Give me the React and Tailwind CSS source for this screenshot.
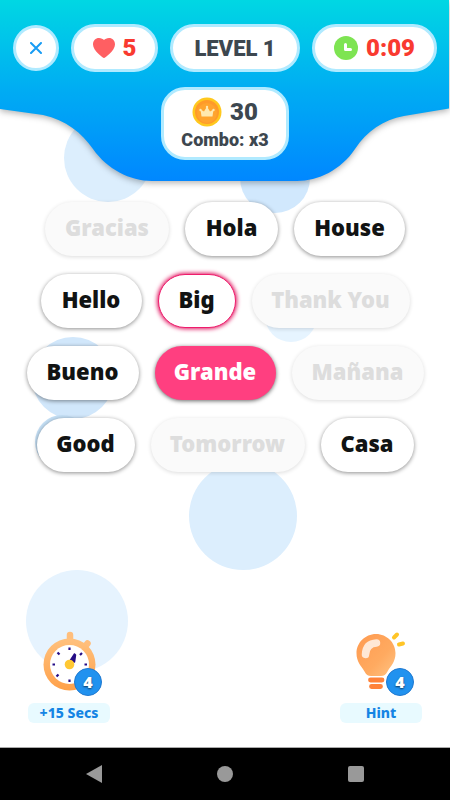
import React, { useState } from 'react';
import clsx from 'clsx';

const ROWS = [
  [
    { text: 'Gracias', done: true, size: 'w-31' },
    { text: 'Hola', size: 'w-[93px]' },
    { text: 'House', size: 'w-[111px]' },
  ],
  [
    { text: 'Hello', size: 'w-[101px]' },
    { text: 'Big', hinted: true, size: 'w-[78px]' },
    { text: 'Thank You', done: true, size: 'w-[158px]' },
  ],
  [
    { text: 'Bueno', size: 'w-[112px]' },
    { text: 'Grande', size: 'w-[121px]' },
    { text: 'Mañana', done: true, size: 'w-[132px]' },
  ],
  [
    { text: 'Good', size: 'w-[98px]' },
    { text: 'Tomorrow', done: true, size: 'w-[154px]' },
    { text: 'Casa', size: 'w-[93px]' },
  ],
];

const pill = 'flex items-center justify-center bg-white border-3 border-[#b0eaff]';

function Backdrop() {
  return (
    <svg
      className="absolute inset-0 h-full w-full"
      viewBox="0 0 450 748"
      preserveAspectRatio="xMidYMin slice"
      aria-hidden="true"
    >
      <circle cx="108" cy="158" r="44" fill="#dceefd" />
      <circle cx="275" cy="178" r="35" fill="#d1e8fd" />
      <circle cx="291" cy="316" r="26" fill="#e6f4ff" />
      <circle cx="73" cy="378" r="41" fill="#d1e7fb" />
      <circle cx="62" cy="442" r="27" fill="#c5e0f6" />
      <circle cx="243" cy="516" r="54" fill="#dceefd" />
      <circle cx="77" cy="621" r="51" fill="#e6f3fe" />
    </svg>
  );
}

function HeaderShape() {
  return (
    <svg
      className="absolute inset-0 h-full w-full overflow-visible drop-shadow-[0_2px_3px_rgba(0,0,0,0.3)]"
      viewBox="0 0 450 181"
      preserveAspectRatio="none"
      aria-hidden="true"
    >
      <defs>
        <linearGradient id="sky" x1="0" y1="0" x2="0" y2="1">
          <stop offset="0" stopColor="#00d7e3" />
          <stop offset="0.5" stopColor="#00acf3" />
          <stop offset="1" stopColor="#0087ff" />
        </linearGradient>
      </defs>
      <path
        fill="url(#sky)"
        d="M0 0H449V108.5L404 116C383 120 367 131 355 149C341 170 318 181 297 181H152C130 181 107 169 93 149C82 133 66 120 43 115L0 109Z"
      />
    </svg>
  );
}

function Heart() {
  return (
    <svg width="22" height="20" viewBox="0 0 22 20" aria-hidden="true">
      <path
        fill="#ff5f62"
        d="M11 20C10 20 0 12.5 0 6.5C0 2.5 2.6 0 6 0C8.2 0 10 1.2 11 2C12 1.2 13.8 0 16 0C19.4 0 22 2.5 22 6.5C22 12.5 12 20 11 20Z"
      />
    </svg>
  );
}

function Clock() {
  return (
    <svg width="24" height="24" viewBox="0 0 24 24" aria-hidden="true">
      <circle cx="12" cy="12" r="12" fill="#7ee452" />
      <path d="M11.5 8.5V13.5H16.5" fill="none" stroke="#fff" strokeWidth="3" strokeLinecap="round" strokeLinejoin="round" />
    </svg>
  );
}

function Coin() {
  return (
    <svg width="30" height="30" viewBox="0 0 30 30" aria-hidden="true">
      <circle cx="15" cy="15" r="14.5" fill="#ffc81e" />
      <circle cx="15" cy="15" r="12" fill="#ff9a2a" />
      <circle cx="15" cy="16" r="10" fill="#ffa42e" />
      <path
        d="M9.5 19.5L8.5 12.5L12 14.5L15 9.5L18 14.5L21.5 12.5L20.5 19.5Z"
        fill="#ffe9b0"
      />
      <g fill="#ffe9b0">
        <circle cx="8.5" cy="13" r="1.2" />
        <circle cx="15" cy="10" r="1.2" />
        <circle cx="21.5" cy="13" r="1.2" />
      </g>
    </svg>
  );
}

function Stopwatch() {
  return (
    <svg width="54" height="60" viewBox="0 0 54 60" aria-hidden="true">
      <defs>
        <linearGradient id="rim" x1="0" y1="0" x2="0" y2="1">
          <stop offset="0" stopColor="#ffc17e" />
          <stop offset="1" stopColor="#ffa14a" />
        </linearGradient>
      </defs>
      <path d="M28 4V12M41 18L45.5 12.5" stroke="#ffbe7c" strokeWidth="6.5" strokeLinecap="round" />
      <circle cx="27.5" cy="33.5" r="26" fill="url(#rim)" />
      <circle cx="27.5" cy="33.5" r="19.5" fill="#fff" />
      <g stroke="#250d86" strokeWidth="2.2">
        <path d="M27.5 16.5V19M27.5 48.5V51M10.5 33.5H13M42.5 33.5H45M15.5 21.5L17.5 23.5M38 24L40 22M14.5 45.5L16.5 43.5" />
      </g>
      <path d="M28 30L32.5 23L33.5 24L32.5 31Z" fill="#250d86" stroke="#250d86" strokeWidth="1.5" strokeLinejoin="round" />
      <circle cx="27.5" cy="33.5" r="4.8" fill="#ffc833" />
    </svg>
  );
}

function Bulb() {
  return (
    <svg width="54" height="60" viewBox="0 0 54 60" aria-hidden="true">
      <defs>
        <linearGradient id="glass" x1="0" y1="0" x2="1" y2="1">
          <stop offset="0" stopColor="#ff9a50" />
          <stop offset="0.6" stopColor="#ffaa60" />
          <stop offset="1" stopColor="#ffc383" />
        </linearGradient>
      </defs>
      <path
        fill="url(#glass)"
        d="M22 3C11 3 2.5 12 2.5 22C2.5 31 7 34.5 10.5 40.5C12 43.5 14 45 17 45H27C30 45 32 43.5 33.5 40.5C37 34.5 41.5 31 41.5 22C41.5 12 33 3 22 3Z"
      />
      <path d="M11.5 23.5Q12 12.5 22.5 12" fill="none" stroke="#fff" strokeOpacity="0.75" strokeWidth="7.5" strokeLinecap="round" />
      <path d="M16.5 49H28M17.5 55.5H26.5" stroke="#ff8239" strokeWidth="4.8" strokeLinecap="round" />
      <path d="M40 6.5L43 3.5M45 13.5L49 12.5" stroke="#ffc527" strokeWidth="4" strokeLinecap="round" />
    </svg>
  );
}

function WordPill({ word, selected, onClick }) {
  return (
    <button
      type="button"
      disabled={word.done}
      onClick={onClick}
      className={clsx(
        'h-[54px] shrink-0 rounded-full pb-1 font-["Noto_Sans",sans-serif] text-[22px] leading-7 font-black whitespace-nowrap',
        word.size,
        word.done && 'bg-[#fafafa] text-[#dddddd] shadow-[0_1px_4px_rgba(0,0,0,0.14)]',
        !word.done && selected && 'bg-[#ff3f80] text-white shadow-[0_1px_4px_rgba(0,0,0,0.6)]',
        !word.done && !selected && 'bg-white text-[#111313]',
        !word.done && !selected && !word.hinted && 'shadow-[0_1px_4px_rgba(0,0,0,0.45)]',
        word.hinted && !selected && 'border border-[#ee1c6c] shadow-[0_0_4px_1px_#e0145f]'
      )}
    >
      {word.text}
    </button>
  );
}

function Booster({ icon, label, count }) {
  return (
    <button type="button" className="flex w-[82px] flex-col items-center">
      <span className="relative mb-3 block">
        {icon}
        <span className="absolute -right-1.5 -bottom-[5px] flex h-7 w-7 items-center justify-center rounded-full border border-[#2079d0] bg-[#2192ef] text-base font-black text-white text-shadow-[0_1px_2px_rgba(0,0,0,0.6)]">
          {count}
        </span>
      </span>
      <span className="h-5 w-full rounded-md bg-[#e8faff] text-sm leading-5 font-extrabold text-[#1584e4]">
        {label}
      </span>
    </button>
  );
}

export default function App() {
  const [selected, setSelected] = useState('Grande');

  return (
    <div className='flex min-h-screen flex-col bg-white font-["Noto_Sans",sans-serif]'>
      <div className="relative flex flex-1 flex-col border-b border-[#aaaaaa]">
        <Backdrop />

        <header className="relative px-[13px] pt-6 pb-[21px]">
          <HeaderShape />
          <div className='relative font-["Roboto",sans-serif] font-black text-[#3d474f]'>
            <div className="grid grid-cols-[46px_87fr_130fr_125fr] items-center gap-3">
              <button type="button" aria-label="Close" className={clsx(pill, 'h-[46px] rounded-full')}>
                <svg width="12" height="12" viewBox="0 0 12 12" aria-hidden="true">
                  <path d="M1 1L11 11M11 1L1 11" stroke="#189cf4" strokeWidth="2" strokeLinecap="round" />
                </svg>
              </button>
              <div className={clsx(pill, 'h-12 gap-2 rounded-full text-2xl text-[#f93a30]')}>
                <Heart />
                <span>5</span>
              </div>
              <h1 className={clsx(pill, 'h-12 rounded-full text-[22px]')}>LEVEL 1</h1>
              <div className={clsx(pill, 'h-12 gap-2 rounded-full text-2xl text-[#f93a30]')}>
                <Clock />
                <span>0:09</span>
              </div>
            </div>

            <div className={clsx(pill, 'mx-auto mt-[15px] h-[73px] w-32 flex-col rounded-3xl')}>
              <div className="flex items-center gap-2 text-2xl leading-8">
                <Coin />
                <span>30</span>
              </div>
              <p className="text-lg leading-6">Combo: x3</p>
            </div>
          </div>
        </header>

        <main className="relative mt-[21px] flex flex-col gap-[18px]">
          {ROWS.map((row, i) => (
            <div key={i} className="flex justify-center gap-4">
              {row.map((word) => (
                <WordPill
                  key={word.text}
                  word={word}
                  selected={selected === word.text}
                  onClick={() => setSelected(word.text)}
                />
              ))}
            </div>
          ))}
        </main>

        <footer className="relative mt-auto flex justify-between px-7 pb-6">
          <Booster icon={<Stopwatch />} label="+15 Secs" count={4} />
          <Booster icon={<Bulb />} label="Hint" count={4} />
        </footer>
      </div>

      {/* Android navigation bar */}
      <nav className="flex h-[52px] items-center justify-around bg-black px-7">
        <button type="button" aria-label="Back">
          <svg width="16" height="18" viewBox="0 0 16 18" aria-hidden="true">
            <path d="M0 9L16 0V18Z" fill="#999" />
          </svg>
        </button>
        <button type="button" aria-label="Home" className="h-4 w-4 rounded-full bg-[#999999]" />
        <button type="button" aria-label="Recent apps" className="h-4 w-4 rounded-xs bg-[#999999]" />
      </nav>
    </div>
  );
}
